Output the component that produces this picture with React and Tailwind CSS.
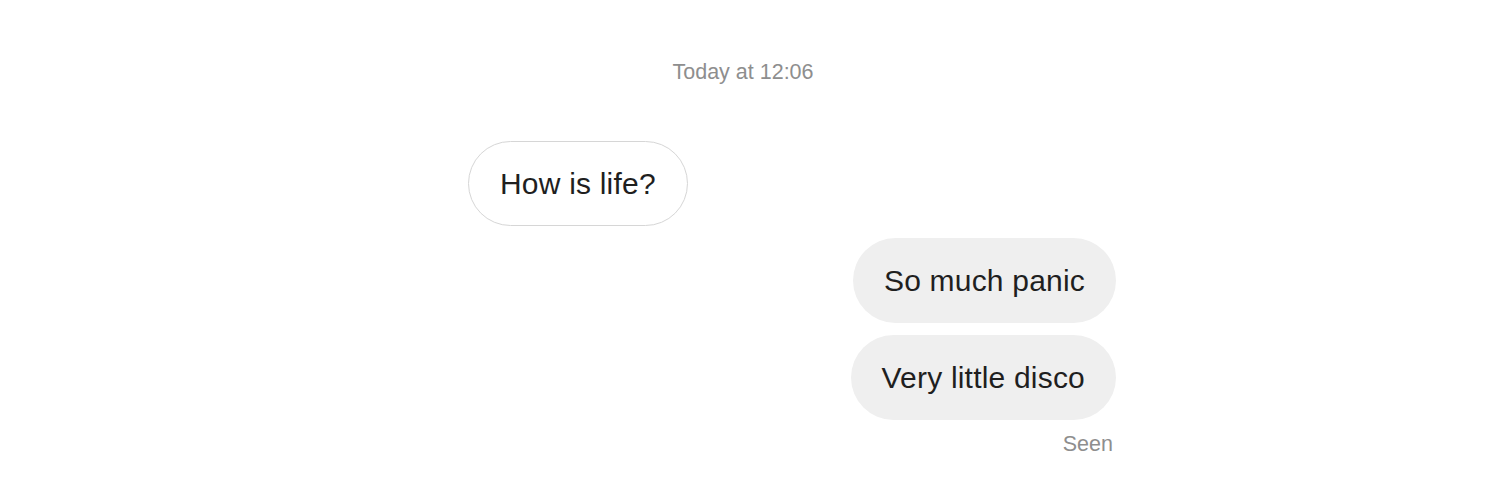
import React from 'react';

const messages = [
  { id: 1, text: 'How is life?', mine: false },
  { id: 2, text: 'So much panic', mine: true },
  { id: 3, text: 'Very little disco', mine: true },
];

export default function App() {
  return (
    <div className="w-[1500px] h-[499px] bg-white overflow-hidden" style={{ fontFamily: '"Liberation Sans", Arial, sans-serif' }}>
      <div className="pt-[58px] flex justify-center pr-[14px]">
        <span className="text-[21.5px] leading-[28px] text-[#8e8e8e]">Today at 12:06</span>
      </div>

      <div className="ml-[468px] w-[648px] mt-[55px] flex flex-col gap-[12px]">
        {messages.map((m) => (
          <div key={m.id} className={`flex ${m.mine ? 'justify-end' : 'justify-start'}`}>
            <div
              className={`h-[85px] px-[31px] rounded-full flex items-center text-[30px] tracking-[0.2px] text-[#1f1f1f] ${
                m.mine ? 'bg-[#efefef]' : 'bg-white border border-[#d6d6d6]'
              }`}
            >
              {m.text}
            </div>
          </div>
        ))}
        <div className="flex justify-end pr-[3px] -mt-[2px]">
          <span className="text-[21.5px] leading-[28px] text-[#8e8e8e]">Seen</span>
        </div>
      </div>
    </div>
  );
}
